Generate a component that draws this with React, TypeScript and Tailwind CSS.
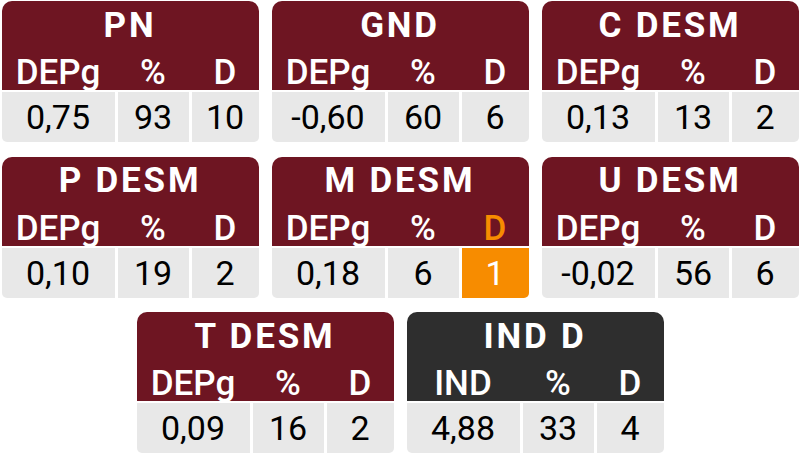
import React from "react";

type Card = {
  title: string;
  labels: [string, string, string];
  values: [string, string, string];
  dark?: boolean;
  highlight?: boolean;
};

const row1: Card[] = [
  { title: "PN", labels: ["DEPg", "%", "D"], values: ["0,75", "93", "10"] },
  { title: "GND", labels: ["DEPg", "%", "D"], values: ["-0,60", "60", "6"] },
  { title: "C DESM", labels: ["DEPg", "%", "D"], values: ["0,13", "13", "2"] },
];
const row2: Card[] = [
  { title: "P DESM", labels: ["DEPg", "%", "D"], values: ["0,10", "19", "2"] },
  { title: "M DESM", labels: ["DEPg", "%", "D"], values: ["0,18", "6", "1"], highlight: true },
  { title: "U DESM", labels: ["DEPg", "%", "D"], values: ["-0,02", "56", "6"] },
];
const row3: Card[] = [
  { title: "T DESM", labels: ["DEPg", "%", "D"], values: ["0,09", "16", "2"] },
  { title: "IND D", labels: ["IND", "%", "D"], values: ["4,88", "33", "4"], dark: true },
];

function StatCard({ c }: { c: Card }) {
  const headBg = c.dark ? "bg-[#2e2e2e]" : "bg-[#6e1522]";
  return (
    <div className="flex h-[141px] w-[257px] flex-col overflow-hidden rounded-t-[10px] rounded-b-[5px]">
      <div className={`${headBg} flex h-[89px] flex-col pt-[4px] text-white`}>
        <div className="flex h-[42px] items-center justify-center text-[35px] font-bold tracking-[0.08em]">
          {c.title}
        </div>
        <div className="grid h-[40px] grid-cols-[113px_71px_67px] gap-[3px] text-[35px] font-medium">
          {c.labels.map((l, i) => (
            <div
              key={i}
              className={`flex items-center justify-center ${
                c.highlight && i === 2 ? "text-[#f78c00]" : "text-white"
              }`}
            >
              {l}
            </div>
          ))}
        </div>
      </div>
      <div className="mt-[2px] grid h-[50px] grid-cols-[113px_71px_67px] gap-[3px] text-[34px] text-black">
        {c.values.map((v, i) => (
          <div
            key={i}
            className={`flex items-center justify-center pb-[4px] ${
              c.highlight && i === 2 ? "bg-[#f78c00] text-white" : "bg-[#e8e8e8]"
            }`}
          >
            {v}
          </div>
        ))}
      </div>
    </div>
  );
}

export default function App() {
  return (
    <div
      className="flex h-[468px] w-[800px] flex-col gap-[14.5px] bg-white pt-[1px]"
      style={{ fontFamily: "Roboto, 'Noto Sans', sans-serif" }}
    >
      {[row1, row2, row3].map((r, ri) => (
        <div key={ri} className="flex justify-center gap-[13px]">
          {r.map((c) => (
            <StatCard key={c.title} c={c} />
          ))}
        </div>
      ))}
    </div>
  );
}
